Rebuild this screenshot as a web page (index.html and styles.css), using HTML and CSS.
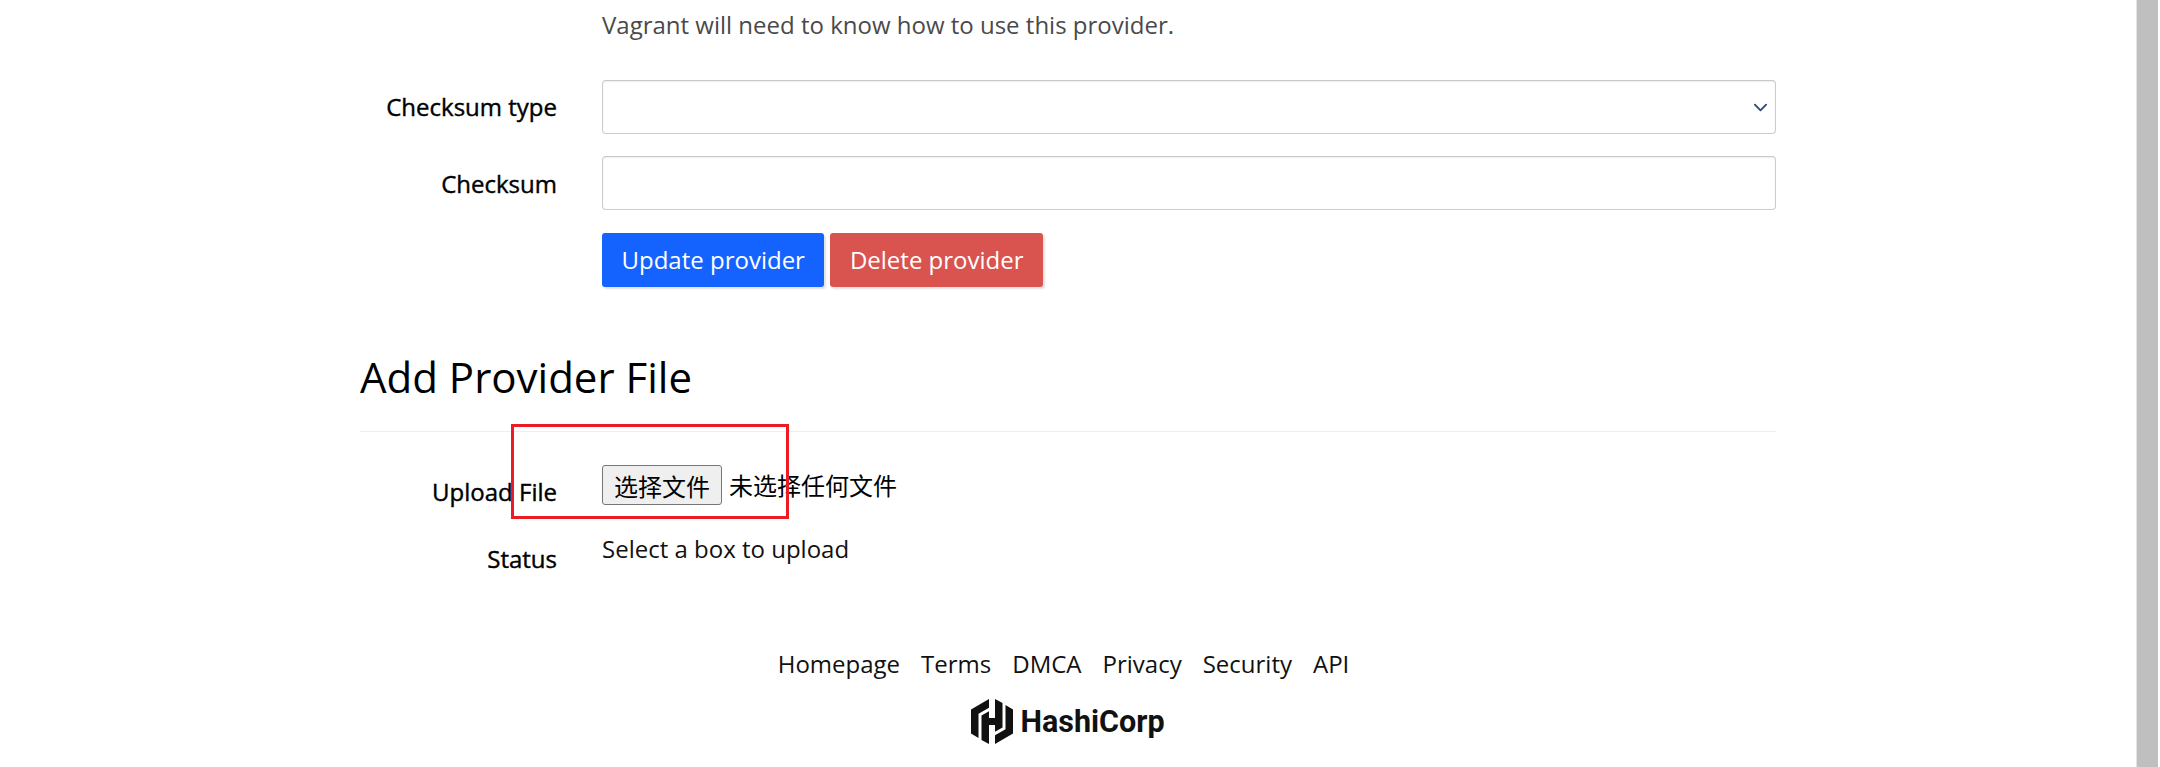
FILE: index.html
```html
<!DOCTYPE html>
<html lang="en">
<head>
    <meta charset="UTF-8">
    <meta name="viewport" content="width=device-width, initial-scale=1.0">
    <title>Add Provider File</title>
    <link rel="stylesheet" href="styles.css">
</head>
<body>
    <div class="page">
        <main class="content">
            <div class="container">
                <div class="form-row help-row">
                    <div></div>
                    <p class="help-text">Vagrant will need to know how to use this provider.</p>
                </div>

                <div class="form-row checksum-type-row">
                    <label class="form-label">Checksum type</label>
                    <div class="select-box">
                        <svg class="chevron" viewBox="0 0 16 16" aria-hidden="true">
                            <path d="M2 5l6 6 6-6" fill="none" stroke="#2f4a75" stroke-width="2" stroke-linecap="round" stroke-linejoin="round"/>
                        </svg>
                    </div>
                </div>

                <div class="form-row checksum-row">
                    <label class="form-label">Checksum</label>
                    <div class="text-input"></div>
                </div>

                <div class="form-row button-row">
                    <div></div>
                    <div class="buttons">
                        <button class="btn btn-primary">Update provider</button>
                        <button class="btn btn-danger">Delete provider</button>
                    </div>
                </div>

                <h2 class="section-title">Add Provider File</h2>

                <div class="upload-section">
                    <div class="form-row upload-row">
                        <label class="form-label">Upload File</label>
                        <div class="file-picker">
                            <button class="file-button">选择文件</button>
                            <span class="file-name">未选择任何文件</span>
                        </div>
                    </div>
                    <div class="form-row status-row">
                        <label class="form-label">Status</label>
                        <div class="status-text">Select a box to upload</div>
                    </div>
                    <div class="highlight-box"></div>
                </div>

                <footer class="footer">
                    <nav class="footer-links">
                        <a href="#">Homepage</a>
                        <a href="#">Terms</a>
                        <a href="#">DMCA</a>
                        <a href="#">Privacy</a>
                        <a href="#">Security</a>
                        <a href="#">API</a>
                    </nav>
                    <div class="logo">
                        <svg class="logo-mark" viewBox="0 0 42 45" aria-hidden="true">
                            <path d="M18 0L0 10.500V34.500L7.500 39V14.800L18 8.700Z"/>
                            <path d="M24 0V19H18V12.300L10.500 16.600V41L18 45V26H24V32.700L31.500 28.400V4Z"/>
                            <path d="M24 45L42 34.500V10.500L34.500 6V30.200L24 36.300Z"/>
                        </svg>
                        <span class="logo-text">HashiCorp</span>
                    </div>
                </footer>
            </div>
        </main>
        <div class="scrollbar"></div>
    </div>
</body>
</html>
```

FILE: styles.css
```css
html, body {
  margin: 0;
  height: 100%;
  background-color: #ffffff;
}

body {
  font-family: 'Open Sans', 'Noto Sans CJK SC', sans-serif;
  font-size: 24px;
  color: #111111;
  overflow: hidden;
}

.page {
  display: flex;
  height: 767px;
}

.content {
  flex: 1;
  min-width: 0;
}

.container {
  width: 1416px;
  margin: 0 auto;
}

.form-row {
  display: grid;
  grid-template-columns: 197px 1fr;
  column-gap: 45px;
}

.form-label {
  text-align: right;
  color: #000000;
  line-height: 30px;
  -webkit-text-stroke: 0.4px #000000; /* labels are a touch heavier than regular */
}

.help-row {
  height: 80px;
}

.help-text {
  margin: 10px 0 0;
  line-height: 30px;
  color: #4a4a4a;
}

.checksum-type-row .form-label {
  padding-top: 12px;
}

.checksum-row .form-label {
  padding-top: 13px;
}

.select-box,
.text-input {
  height: 54px;
  box-sizing: border-box;
  background-color: #ffffff;
  border: 1px solid #cccccc;
  border-top-color: #c8c8c8;
  border-radius: 4px;
  box-shadow: inset 0 1px 2px rgba(0, 0, 0, 0.07);
}

.select-box {
  display: flex;
  align-items: center;
  justify-content: flex-end;
  padding-right: 7px;
}

.chevron {
  width: 15px;
  height: 15px;
}

.checksum-row {
  margin-top: 22px;
}

.button-row {
  margin-top: 23px;
}

.buttons {
  display: flex;
  gap: 6px;
}

.btn {
  height: 54px;
  padding: 0 19.5px 2px;
  border: none;
  border-radius: 3px;
  color: #ffffff;
  font-family: inherit;
  font-size: 24px;
  box-shadow: 2px 2px 2px rgba(0, 0, 0, 0.12);
}

.btn-primary {
  background-color: #1563ff;
}

.btn-danger {
  background-color: #d9534f;
}

.section-title {
  margin: 62px 0 0;
  font-size: 42px;
  font-weight: 400;
  line-height: 56px;
  color: #000000;
}

.upload-section {
  position: relative;
  margin-top: 26px;
  padding-top: 33px;
  border-top: 1px solid #eeeeee;
}

.upload-row {
  height: 74px;
}

.upload-row .form-label {
  padding-top: 12px;
}

.file-picker {
  display: flex;
  align-items: flex-start;
  gap: 7px;
  line-height: 40px;
}

.file-button {
  width: 120px;
  height: 40px;
  padding: 0;
  background-color: #efefef;
  border: 1px solid #767676;
  border-radius: 3px;
  color: #000000;
  font-family: 'Noto Sans CJK SC', sans-serif;
  font-size: 24px;
}

.file-name {
  font-family: 'Noto Sans CJK SC', sans-serif;
  color: #000000;
}

.status-row .form-label {
  padding-top: 5px;
}

.status-text {
  line-height: 30px;
  margin-top: -5px;
}

/* red annotation drawn over the screenshot */
.highlight-box {
  position: absolute;
  left: 151px;
  top: -8px;
  width: 278px;
  height: 95px;
  box-sizing: border-box;
  border: 3px solid #ed1c24;
}

.footer {
  margin-top: 75px;
  display: flex;
  flex-direction: column;
  align-items: center;
}

.footer-links {
  display: flex;
  gap: 21px;
  padding-right: 9px;
  line-height: 30px;
}

.footer-links a {
  color: #111111;
  text-decoration: none;
}

.logo {
  display: flex;
  align-items: center;
  gap: 7px;
  margin-top: 20px;
}

.logo-mark {
  width: 42px;
  height: 45px;
  fill: #111111;
}

.logo-text {
  font-family: 'Roboto', sans-serif;
  font-size: 30.5px;
  font-weight: 700;
  line-height: 45px;
  color: #111111;
}

.scrollbar {
  width: 21px;
  margin-right: 2px;
  background-color: #bfbfbf;
  border-left: 1px solid #e4e4e4;
}
```
